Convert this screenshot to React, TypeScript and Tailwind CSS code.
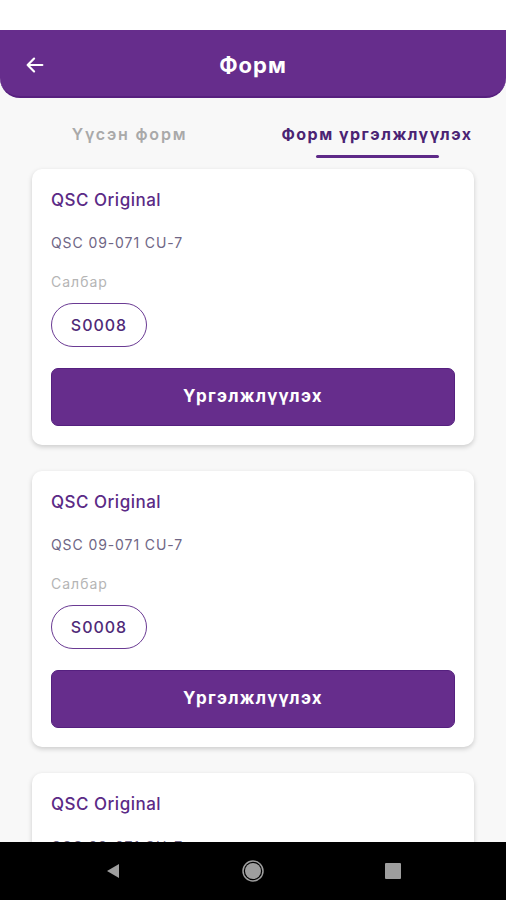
import React from "react";

const font = { fontFamily: "Inter, 'Noto Sans', sans-serif" };

function Card() {
  return (
    <div className="bg-white rounded-[10px] shadow-[0_2px_5px_rgba(0,0,0,0.18)] px-[19px] pt-[20px] pb-[19px]">
      <div className="text-[17px] leading-[22px] font-medium text-[#5b2a86] tracking-[0.5px]">QSC Original</div>
      <div className="mt-[23px] text-[14px] leading-[18px] text-[#6f6685] tracking-[0.9px]">QSC 09-071 CU-7</div>
      <div className="mt-[21px] text-[14px] leading-[18px] text-[#b5b5b5] tracking-[1px]">Салбар</div>
      <div className="mt-[12px] flex">
        <div className="h-[44px] w-[96px] rounded-full border border-[#6a3a93] flex items-center justify-center text-[16px] font-medium text-[#4f2a78] tracking-[1px]">
          S0008
        </div>
      </div>
      <button className="mt-[21px] w-full h-[58px] rounded-[7px] bg-[#662d8c] border border-[#55207f] text-white text-[17px] font-bold tracking-[1.3px]">
        Үргэлжлүүлэх
      </button>
    </div>
  );
}

export default function App() {
  return (
    <div className="w-[506px] h-[900px] bg-[#f8f8f8] flex flex-col overflow-hidden" style={font}>
      <div className="h-[30px] bg-white shrink-0" />
      <div className="h-[68px] shrink-0 bg-[#662d8c] rounded-b-[20px] border-b-2 border-[#57207f] flex items-center relative">
        <svg className="absolute left-[24px] top-[24px]" width="22" height="22" viewBox="0 0 24 24" fill="none" stroke="white" strokeWidth="2.4" strokeLinecap="round" strokeLinejoin="round">
          <path d="M20 12H4M11 5l-7 7 7 7" />
        </svg>
        <div className="w-full text-center text-white text-[22px] font-bold tracking-[1px] pt-[5px]">Форм</div>
      </div>
      <div className="flex shrink-0 h-[60px]">
        <div className="w-[259px] flex justify-center">
          <div className="pt-[24px] text-[16px] font-semibold text-[#a9a9a9] tracking-[1.8px] whitespace-nowrap">Үүсэн форм</div>
        </div>
        <div className="w-[236px] flex flex-col items-center">
          <div className="pt-[24px] text-[16px] font-bold text-[#4a2373] tracking-[1.5px] whitespace-nowrap">Форм үргэлжлүүлэх</div>
          <div className="mt-[9px] h-[3px] w-[123px] bg-[#5e2a88] rounded-full" />
        </div>
      </div>
      <div className="flex-1 overflow-hidden px-[32px] pt-[11px] flex flex-col gap-[26px]">
        <Card />
        <Card />
        <Card />
      </div>
      <div className="h-[58px] shrink-0 bg-black flex items-center justify-between px-[104px]">
        <svg width="18" height="18" viewBox="0 0 18 18"><path d="M15 2L3 9l12 7z" fill="#9e9e9e" /></svg>
        <svg width="24" height="24" viewBox="0 0 24 24"><circle cx="12" cy="12" r="10" fill="none" stroke="#9e9e9e" strokeWidth="1.5" /><circle cx="12" cy="12" r="8" fill="#9e9e9e" /></svg>
        <svg width="18" height="18" viewBox="0 0 18 18"><rect x="1" y="1" width="16" height="16" rx="1" fill="#9e9e9e" /></svg>
      </div>
    </div>
  );
}
